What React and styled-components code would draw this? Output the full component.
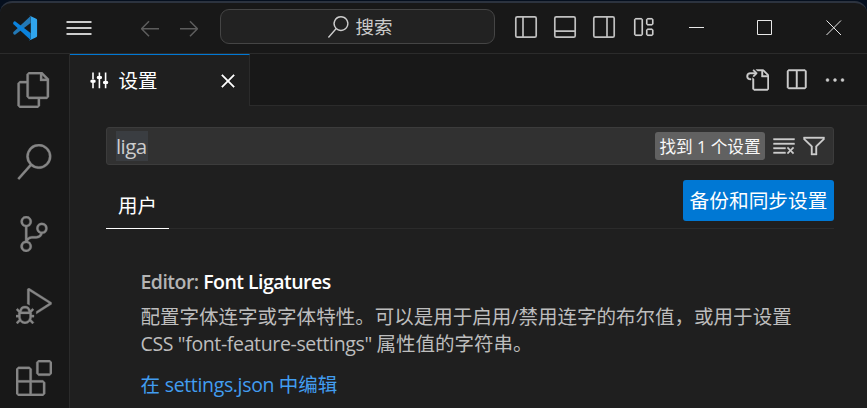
import React from "react";
import styled, { createGlobalStyle } from "styled-components";
import {
  VscFiles, VscSearch, VscSourceControl, VscDebugAlt, VscExtensions,
  VscArrowLeft, VscArrowRight, VscGoToFile, VscSplitHorizontal, VscEllipsis,
  VscClearAll, VscFilter, VscClose, VscLayout,
} from "react-icons/vsc";

const GlobalStyle = createGlobalStyle`
  * { box-sizing: border-box; }
  body { margin: 0; background: #050f1e; overflow: hidden; }
  svg { display: block; flex: none; }
`;

const Backdrop = styled.div`
  height: 408px;
  padding-top: 1px;
  background: #050f1e;
`;

const Window = styled.div`
  display: flex;
  flex-direction: column;
  width: 867px;
  height: 407px;
  overflow: hidden;
  border-top: 2px solid #2c333f;
  border-radius: 12px 12px 0 0;
  background: #181818;
  color: #cccccc;
  font-family: "Open Sans", "Noto Sans CJK SC", sans-serif;
  font-size: 19.5px;
`;

const TitleBar = styled.header`
  display: flex;
  align-items: center;
  flex: none;
  height: 51px;
  padding-left: 12px;
  border-bottom: 1px solid #2b2b2b;
`;

const MenuButton = styled.div`
  display: flex;
  margin-left: 28px;
`;

const History = styled.div`
  display: flex;
  gap: 15px;
  margin-left: 46px;
  color: #5c5c5c;
`;

const CommandCenter = styled.div`
  display: flex;
  align-items: center;
  justify-content: center;
  gap: 6px;
  width: 275px;
  height: 35px;
  margin: -3px 0 0 19px;
  padding-left: 5px;
  border: 1px solid #454545;
  border-radius: 9px;
  background: #222222;
  font-size: 18.5px;
  line-height: 24px;
`;

const LayoutControls = styled.div`
  display: flex;
  gap: 15px;
  margin: -2px 0 0 19px;
`;

const WindowControls = styled.div`
  display: flex;
  gap: 52px;
  margin-left: 33px;
  color: #e8e8e8;
`;

const Workbench = styled.div`
  display: flex;
  flex: 1;
  min-height: 0;
`;

const ActivityBar = styled.nav`
  display: flex;
  flex-direction: column;
  flex: none;
  gap: 36px;
  width: 70px;
  padding: 18px 0 0 16px;
  border-right: 1px solid #2b2b2b;
  color: #868686;

  svg { stroke-width: 0.2px; }
`;

const EditorGroup = styled.main`
  display: flex;
  flex-direction: column;
  flex: 1;
  background: #1f1f1f;
`;

const TabStrip = styled.div`
  display: flex;
  justify-content: space-between;
  flex: none;
  height: 52px;
  background: linear-gradient(#2b2b2b, #2b2b2b) bottom / 100% 1px no-repeat #181818;
`;

const Tab = styled.div`
  display: flex;
  align-items: center;
  width: 180px;
  height: 52px;
  padding: 0 9px 0 17px;
  border-top: 1px solid #0078d4;
  border-right: 1px solid #2b2b2b;
  background: #1f1f1f;
  color: #ffffff;

  svg { stroke-width: 0.3px; }
`;

const TabLabel = styled.span`
  flex: 1;
  margin-left: 7.5px;
  line-height: 28px;
`;

const EditorActions = styled.div`
  display: flex;
  align-items: center;
  gap: 15px;
  padding-right: 20px;

  svg { stroke-width: 0.3px; }
`;

const SettingsPage = styled.section`
  padding: 21px 33px 0 36px;
`;

const SearchInput = styled.div`
  display: flex;
  align-items: center;
  height: 38px;
  padding: 0 7px 0 9px;
  border: 1px solid #3c3c3c;
  border-radius: 3px;
  background: #313131;

  svg { stroke-width: 0.25px; }
`;

const SelectedText = styled.span`
  width: 32px;
  height: 30px;
  margin-right: auto;
  background: #3a3d41;
  font-size: 20.5px;
  line-height: 31px;
  letter-spacing: -0.6px;
`;

const CountBadge = styled.span`
  width: 110px;
  height: 28px;
  margin-right: 7px;
  border-radius: 3px;
  background: #616161;
  color: #f8f8f8;
  font-size: 16.6px;
  line-height: 29px;
  text-align: center;
  white-space: nowrap;
`;

const FilterIcon = styled.span`
  display: flex;
  margin-left: 6px;
`;

const ScopeBar = styled.div`
  display: flex;
  justify-content: space-between;
  height: 64px;
  border-bottom: 1px solid #2b2b2b;
`;

const ScopeTab = styled.div`
  width: 63px;
  height: 49px;
  margin-top: 15px;
  border-bottom: 1px solid #ffffff;
  color: #ffffff;
  line-height: 51px;
  text-align: center;
`;

const SyncButton = styled.div`
  width: 151px;
  height: 41px;
  margin-top: 15px;
  border-radius: 3px;
  background: #0078d4;
  color: #ffffff;
  font-size: 19.7px;
  line-height: 41px;
  text-align: center;
`;

const SettingItem = styled.article`
  padding: 39px 0 0 34.5px;
  line-height: 28px;
  white-space: nowrap;
`;

const SettingTitle = styled.div`
  font-weight: 600;
  letter-spacing: -0.53px;
`;

const SettingCategory = styled.span`
  color: #b4b4b4;
`;

const SettingName = styled.span`
  color: #ffffff;
`;

const Description = styled.p`
  margin: 7px 0 0;
  color: #bdbdbd;
  font-size: 19.53px;
  line-height: 27.3px;
`;

const JsonLink = styled.div`
  margin-top: 13px;
  color: #429df0;
`;

const Latin = styled.span`
  letter-spacing: ${(p) => p.$tracking};
`;

function Logo() {
  return (
    <svg width="26" height="26" viewBox="0 0 26 26">
      <path d="M1.2 18.4v-1.2L18.6 1v7L3.4 19.6c-.8.5-1.6 0-2.2-1.2Z" fill="#2378b5" />
      <path d="M1.2 7.7v1.2L18.6 25v-7L3.4 6.5c-.8-.5-1.6 0-2.2 1.2Z" fill="#0b82dc" />
      <path d="M18.4.9 24.2 3.7c.6.3.9.8.9 1.4v15.8c0 .6-.3 1.1-.9 1.4l-5.8 2.8c-.7.3-1.4.1-1.8-.4 1 .6 2.2 0 2.2-1.1V2.4c0-1.1-1.2-1.7-2.2-1 .4-.5 1.1-.8 1.8-.5Z" fill="#30a5ed" />
    </svg>
  );
}

function MenuLines() {
  return (
    <svg width="26" height="16" viewBox="0 0 26 16" fill="#cccccc">
      <path d="M.5 1h25v2H.5zM.5 7h25v2H.5zM.5 13h25v2H.5z" />
    </svg>
  );
}

function SlidersIcon() {
  return (
    <svg width="24" height="24" viewBox="0 0 24 24" fill="currentColor">
      <path d="M5.2 3.5h1.6v7H5.2zM5.2 13h1.6v6.3H5.2zM11.6 3.5h1.6v3.6h-1.6zM11.6 10h1.6v9.3h-1.6zM17.8 3.5h1.6v8.6h-1.6zM17.8 15h1.6v4.3h-1.6z" />
      <rect x="3.4" y="10.7" width="5.2" height="3" rx="1.2" />
      <rect x="9.8" y="7" width="5.2" height="3" rx="1.2" />
      <rect x="16" y="12" width="5.2" height="3" rx="1.2" />
    </svg>
  );
}

function PanelIcon({ divider }) {
  return (
    <svg width="24" height="24" viewBox="0 0 24 24" fill="none" stroke="#c0c0c0" strokeWidth="1.7">
      <rect x="1.8" y="1.8" width="20.4" height="20.4" rx="1.5" />
      <path d={divider} />
    </svg>
  );
}

function ControlIcon({ d }) {
  return (
    <svg width="17" height="16" viewBox="0 0 17 16" fill="none" stroke="currentColor" strokeWidth="1">
      <path d={d} />
    </svg>
  );
}

export default function App() {
  return (
    <Backdrop>
      <GlobalStyle />
      <Window>
        <TitleBar>
          <Logo />
          <MenuButton><MenuLines /></MenuButton>
          <History>
            <VscArrowLeft size={24} />
            <VscArrowRight size={24} />
          </History>
          <CommandCenter>
            <VscSearch size={22} />
            <span>搜索</span>
          </CommandCenter>
          <LayoutControls>
            <PanelIcon divider="M9 2v20" />
            <PanelIcon divider="M2 16.2h20" />
            <PanelIcon divider="M15 2v20" />
            <VscLayout size={24} strokeWidth={0.1} />
          </LayoutControls>
          <WindowControls>
            <ControlIcon d="M1 7.5h15" />
            <ControlIcon d="M.5.5h14v14h-14z" />
            <ControlIcon d="m.5.5 14.5 14.5m0-14.5-14.5 14.5" />
          </WindowControls>
        </TitleBar>
        <Workbench>
          <ActivityBar>
            <VscFiles size={36} />
            <VscSearch size={36} />
            <VscSourceControl size={36} />
            <VscDebugAlt size={36} />
            <VscExtensions size={36} />
          </ActivityBar>
          <EditorGroup>
            <TabStrip>
              <Tab>
                <SlidersIcon />
                <TabLabel>设置</TabLabel>
                <VscClose size={24} />
              </Tab>
              <EditorActions>
                <VscGoToFile size={24} />
                <VscSplitHorizontal size={24} />
                <VscEllipsis size={24} />
              </EditorActions>
            </TabStrip>
            <SettingsPage>
              <SearchInput>
                <SelectedText>liga</SelectedText>
                <CountBadge>找到 1 个设置</CountBadge>
                <VscClearAll size={24} />
                <FilterIcon><VscFilter size={24} /></FilterIcon>
              </SearchInput>
              <ScopeBar>
                <ScopeTab>用户</ScopeTab>
                <SyncButton>备份和同步设置</SyncButton>
              </ScopeBar>
              <SettingItem>
                <SettingTitle>
                  <SettingCategory>Editor: </SettingCategory>
                  <SettingName>Font Ligatures</SettingName>
                </SettingTitle>
                <Description>
                  配置字体连字或字体特性。可以是用于启用/禁用连字的布尔值，或用于设置
                  <br />
                  <Latin $tracking="-0.37px">CSS "font-feature-settings" </Latin>属性值的字符串。
                </Description>
                <JsonLink>
                  在<Latin $tracking="-0.35px"> settings.json </Latin>中编辑
                </JsonLink>
              </SettingItem>
            </SettingsPage>
          </EditorGroup>
        </Workbench>
      </Window>
    </Backdrop>
  );
}
